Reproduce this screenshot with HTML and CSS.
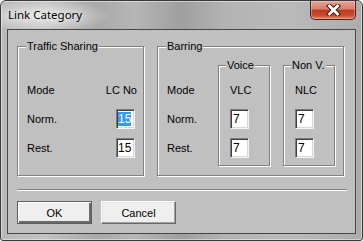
FILE: index.html
```html
<!DOCTYPE html>
<html lang="en">
<head>
  <meta charset="UTF-8" />
  <title>Link Category</title>
  <link rel="stylesheet" href="styles.css">
</head>
<body>
  <div class="window">
    <div class="titlebar">
      <span class="title">Link Category</span>
      <span class="close">
        <svg width="15" height="12" viewBox="0 0 15 12">
          <path d="M3.5 2 L11.5 10 M11.5 2 L3.5 10" stroke="#3b1b12" stroke-width="4.8" stroke-linecap="square" fill="none"/>
          <path d="M3.5 2 L11.5 10 M11.5 2 L3.5 10" stroke="#fff" stroke-width="2.8" stroke-linecap="square" fill="none"/>
        </svg>
      </span>
    </div>
    <div class="client">
      <div class="groups">
        <div class="group traffic">
          <span class="legend">Traffic Sharing</span>
          <div class="grid">
            <span>Mode</span><span class="col-head">LC No</span>
            <span>Norm.</span><span class="edit num"><span class="sel">15</span></span>
            <span>Rest.</span><span class="edit num">15</span>
          </div>
        </div>
        <div class="group barring">
          <span class="legend">Barring</span>
          <div class="labels">
            <span>Mode</span>
            <span>Norm.</span>
            <span>Rest.</span>
          </div>
          <div class="group sub">
            <span class="legend">Voice</span>
            <div class="col">
              <span>VLC</span>
              <span class="edit">7</span>
              <span class="edit">7</span>
            </div>
          </div>
          <div class="group sub">
            <span class="legend">Non V.</span>
            <div class="col">
              <span>NLC</span>
              <span class="edit">7</span>
              <span class="edit">7</span>
            </div>
          </div>
        </div>
      </div>
      <div class="separator"></div>
      <div class="buttons">
        <button class="btn default">OK</button>
        <button class="btn">Cancel</button>
      </div>
    </div>
  </div>
</body>
</html>
```

FILE: styles.css
```css
body {
  margin: 0;
  background: #fff;
}
.window {
  box-sizing: border-box;
  width: 363px;
  height: 241px;
  padding: 0 6px 6px;
  border: 1px solid #3a3a3a;
  border-radius: 6px 6px 3px 3px;
  background:
    radial-gradient(ellipse 70px 16px at 40px 15px, rgba(235,235,235,0.9), rgba(235,235,235,0) 100%),
    linear-gradient(90deg, #b9b9b9 0%, #c2c2c2 12%, #a9a9a9 27%, #b6b6b6 37%, #9f9f9f 50%, #b3b3b3 62%, #bababa 80%, #acacac 100%);
  box-shadow: inset 0 0 0 1px rgba(255,255,255,0.45);
  display: flex;
  flex-direction: column;
}
.titlebar {
  height: 28px;
  display: flex;
  justify-content: space-between;
  align-items: flex-start;
}
.title {
  margin: 6px 0 0 1px;
  font-family: "Noto Sans", sans-serif;
  font-size: 11.5px;
  line-height: 16px;
  color: #000;
  text-shadow: 0 0 6px rgba(255,255,255,0.9);
}
.close {
  box-sizing: border-box;
  width: 46px;
  height: 19px;
  border: 1px solid #4b2118;
  border-top: none;
  border-radius: 0 0 5px 5px;
  background: linear-gradient(to bottom, #e6a493 0%, #d67d69 45%, #c1371f 52%, #c94d33 80%, #de8466 100%);
  box-shadow: inset 0 0 0 1px rgba(255,255,255,0.3);
  display: flex;
  align-items: center;
  justify-content: center;
}
.close svg {
  display: block;
}
.client {
  flex: 1;
  border: 1px solid #474747;
  background: #c0c0c0;
  padding: 16px 8px 0 9px;
  font-family: "Liberation Sans", Arial, sans-serif;
  font-size: 11px;
  color: #000;
}
.groups {
  display: flex;
  gap: 13px;
}
.group {
  position: relative;
  box-sizing: border-box;
  border: 1px solid #808080;
  box-shadow: inset 1px 1px 0 #fff, 1px 1px 0 #fff;
}
.legend {
  position: absolute;
  top: -7px;
  left: 8px;
  padding: 0 1px;
  line-height: 13px;
  background: #c0c0c0;
  white-space: nowrap;
}
.traffic {
  width: 127px;
  height: 130px;
  padding: 28px 6px 0 9px;
}
.grid {
  display: grid;
  grid-template-columns: 1fr auto;
  grid-auto-rows: 29px;
  align-items: center;
}
.col-head {
  text-align: right;
}
.edit {
  box-sizing: border-box;
  width: 19px;
  height: 20px;
  padding-left: 2px;
  background: #fff;
  border: 1px solid;
  border-color: #7c7c7c #f4f4f4 #f4f4f4 #7c7c7c;
  box-shadow: inset 1px 1px 0 #404040, inset -1px -1px 0 #d8d8d8;
  line-height: 18px;
  font-size: 12px;
}
.edit.num {
  justify-self: end;
  margin-right: 2px;
  padding-left: 1px;
}
.sel {
  background: #3399ff;
  color: #fff;
}
.barring {
  width: 187px;
  height: 130px;
  padding-left: 9px;
  display: flex;
  align-items: flex-start;
}
.labels {
  width: 51px;
  margin-top: 28px;
  display: grid;
  grid-auto-rows: 29px;
  align-items: center;
}
.sub {
  width: 52px;
  height: 101px;
  margin-top: 18px;
  margin-right: 13px;
  padding: 9px 0 0 11px;
}
.sub:last-child {
  margin-right: 0;
}
.sub .legend {
  left: 7px;
}
.col {
  display: grid;
  grid-auto-rows: 29px;
  align-items: center;
}
.separator {
  width: 330px;
  height: 0;
  margin-top: 13px;
  border-top: 1px solid #808080;
  border-bottom: 1px solid #fff;
}
.buttons {
  display: flex;
  gap: 9px;
  margin-top: 10px;
}
.btn {
  box-sizing: border-box;
  width: 75px;
  height: 23px;
  padding: 0;
  font-family: "Liberation Sans", Arial, sans-serif;
  font-size: 11px;
  color: #000;
  background: #efefef;
  border: 1px solid;
  border-color: #fff #696969 #696969 #fff;
  box-shadow: inset -1px -1px 0 #a0a0a0, inset 1px 1px 0 #e4e4e4;
}
.btn.default {
  border-color: #5c5c5c;
  box-shadow: inset 1px 1px 0 #fff, inset -2px -2px 0 #6a6a6a;
}
```
